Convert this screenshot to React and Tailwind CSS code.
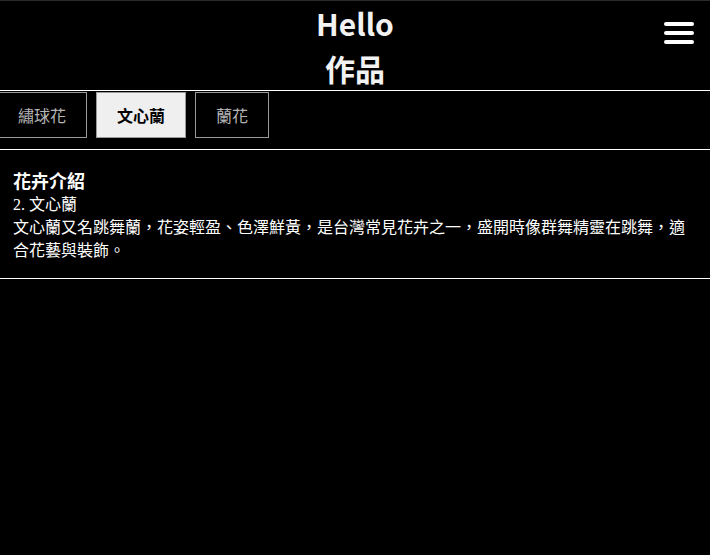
import { useState } from "react";

const tabs = ["繡球花", "文心蘭", "蘭花"];

const cjk = { fontFamily: '"Liberation Serif", "Noto Sans CJK TC", serif' };

export default function App() {
  const [active, setActive] = useState(1);

  return (
    <div className="min-h-[555px] bg-black text-white" style={cjk}>
      {/* header */}
      <header className="grid grid-cols-[1fr_auto_1fr] h-[91px] border-t border-[#2b2b2b] border-b border-b-white">
        <div />
        <h1
          className="text-center text-[30px] font-bold leading-[45px] text-[#f2f2f2]"
          style={{ fontFamily: '"Noto Sans CJK TC", sans-serif' }}
        >
          Hello
          <br />
          作品
        </h1>
        <div className="flex justify-end pt-[21px] pr-4">
          <button className="flex flex-col gap-[5px] w-[30px] h-fit">
            <span className="block h-1 w-full rounded-full bg-white" />
            <span className="block h-1 w-full rounded-full bg-white" />
            <span className="block h-1 w-full rounded-full bg-white" />
          </button>
        </div>
      </header>

      {/* tabs */}
      <div className="flex gap-[9px] ml-[-3px] mt-px" style={{ fontFamily: '"Noto Sans CJK TC", sans-serif' }}>
        {tabs.map((t, i) => (
          <button
            key={t}
            onClick={() => setActive(i)}
            className={
              i === active
                ? "h-[46px] px-5 border border-[#9a9a9a] bg-[#efefef] text-black font-bold text-base"
                : "h-[46px] px-5 border border-[#9a9a9a] bg-black text-[#b5b5b5] text-base"
            }
          >
            {t}
          </button>
        ))}
      </div>

      {/* content */}
      <section className="mt-[11px] border-y border-white px-[13px] pt-[17px] pb-4">
        <h2
          className="text-[18px] font-bold leading-[26px]"
          style={{ fontFamily: '"Noto Sans CJK TC", sans-serif' }}
        >
          花卉介紹
        </h2>
        <p className="text-base leading-[23px]">2. 文心蘭</p>
        <p className="text-base leading-[23px]">
          文心蘭又名跳舞蘭，花姿輕盈、色澤鮮黃，是台灣常見花卉之一，盛開時像群舞精靈在跳舞，適合花藝與裝飾。
        </p>
      </section>
    </div>
  );
}
